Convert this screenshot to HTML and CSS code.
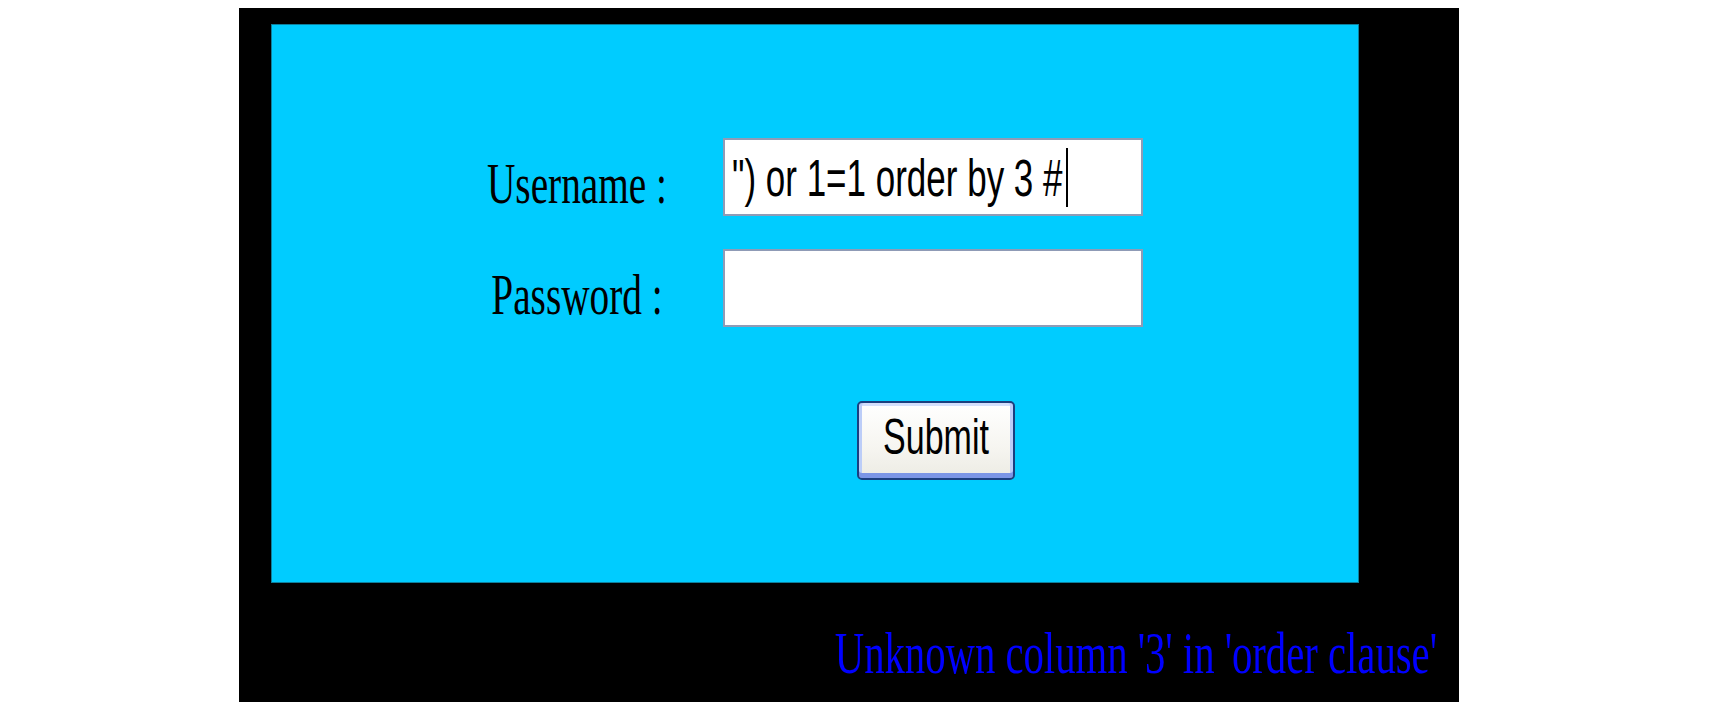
FILE: index.html
```html
<!DOCTYPE html>
<html lang="en">
<head>
<meta charset="utf-8">
<title>Login</title>
<link rel="stylesheet" href="styles.css">
</head>
<body>
<div class="frame">
  <div class="panel">
    <form class="login">
      <div class="label"><span class="stretch">Username :</span></div>
      <div class="field"><span class="stretch">") or 1=1 order by 3 #</span><span class="caret"></span></div>
      <div class="label"><span class="stretch">Password :</span></div>
      <div class="field"></div>
      <button type="button" class="submit"><span class="stretch">Submit</span></button>
    </form>
  </div>
  <div class="error"><span class="stretch">Unknown column '3' in 'order clause'</span></div>
</div>
</body>
</html>
```
FILE: styles.css
```css
html, body {
  margin: 0;
  padding: 0;
  background: #ffffff;
  overflow: hidden;
}

.frame {
  margin: 8px 0 0 239px;
  width: 1220px;
  height: 694px;
  box-sizing: border-box;
  padding: 16px 0 0 32px;
  background: #000000;
}

.panel {
  width: 1088px;
  height: 559px;
  box-sizing: border-box;
  background: #00ccff;
  border: 1px solid #0e7f9c;
  padding-top: 113px;
}

.login {
  margin: 0 0 0 205px;
  display: grid;
  grid-template-columns: 200px 420px;
  column-gap: 46px;
  row-gap: 33px;
  grid-auto-rows: auto;
}

.stretch {
  display: inline-block;
  transform: scaleY(1.47);
  transform-origin: 50% 50%;
  white-space: pre;
}

.label {
  align-self: center;
  text-align: center;
  padding-top: 15px;
  font-family: "Liberation Serif", "Times New Roman", serif;
  font-size: 39.3px;
  line-height: 39.3px;
  color: #000000;
}

.field {
  height: 78px;
  box-sizing: border-box;
  background: #ffffff;
  border: 2px solid #8f9bb6;
  padding-left: 7px;
  display: flex;
  align-items: center;
  font-family: "Liberation Sans", Arial, sans-serif;
  font-size: 35px;
  line-height: 35px;
  color: #000000;
}

.caret {
  display: inline-block;
  width: 2px;
  height: 59px;
  margin-left: 3px;
  background: #000000;
}

.submit {
  grid-column: 2;
  justify-self: start;
  margin-left: 134px;
  margin-top: 41px;
  width: 158px;
  height: 79px;
  box-sizing: border-box;
  border: 2px solid #1b3f7f;
  border-radius: 5px;
  background: linear-gradient(#ffffff, #f6f5f0 60%, #ecebe4);
  box-shadow: inset 0 -5px 0 #7b95e6, inset 3px 0 0 #bccdf8, inset -3px 0 0 #bccdf8, inset 0 3px 0 #d3dffc;
  padding: 0 0 9px 0;
  font-family: "Liberation Sans", Arial, sans-serif;
  font-size: 34px;
  line-height: 34px;
  color: #000000;
}

.error {
  margin-top: 51px;
  padding-right: 22px;
  text-align: right;
  font-family: "Liberation Serif", "Times New Roman", serif;
  font-size: 40.7px;
  line-height: 40.7px;
  color: #0000ff;
}
```
